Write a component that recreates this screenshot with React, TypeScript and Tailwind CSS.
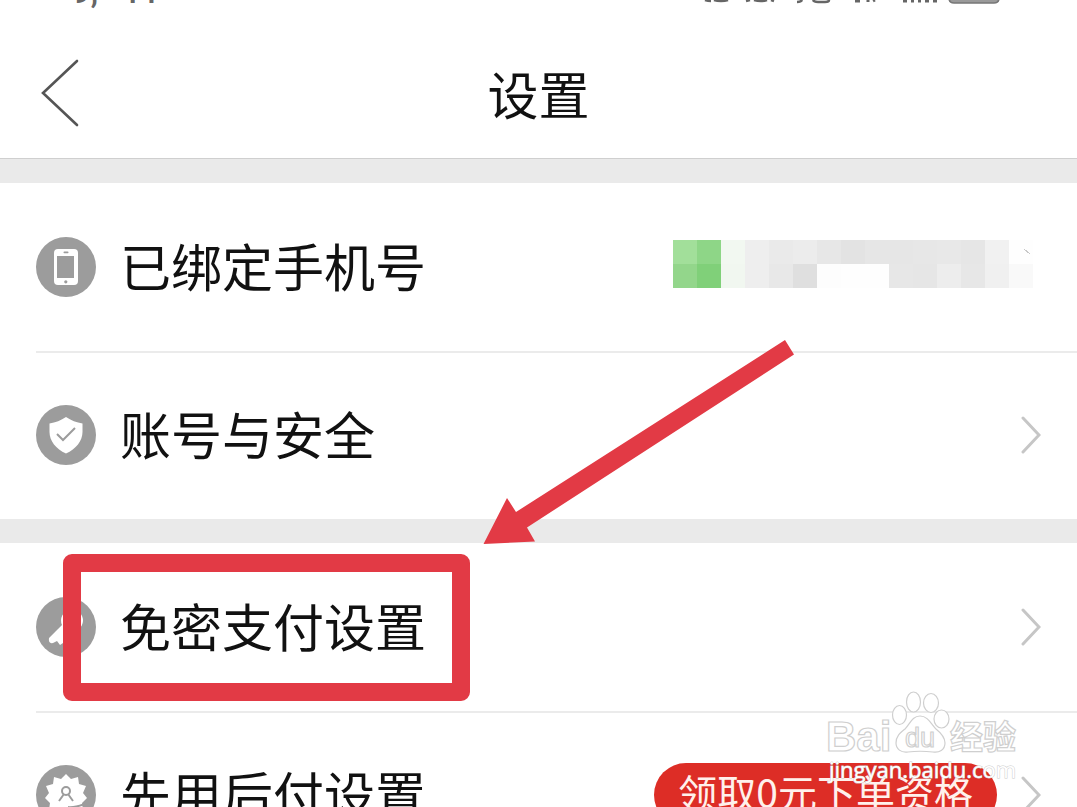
import type { ReactNode } from 'react';

interface RowProps {
  icon: ReactNode;
  label: string;
  extra?: ReactNode;
  divider?: boolean;
  chevron?: boolean;
  highlighted?: boolean;
}

const mosaicTop = [
  '#a2df9a', '#8ed687', '#f2f8f1', '#eeeeee', '#eaeaea', '#ececec', '#e7e7e7', '#e3e3e3',
  '#e6e6e6', '#e6e6e6', '#e7e7e7', '#e8e8e8', '#e6e6e6', '#f1f1f1', '#fefefe',
];
const mosaicBottom = [
  '#93d68b', '#80d079', '#f1f7f0', '#eeeeee', '#e8e8e8', '#dfdfdf', '#fdfdfd', '#fefefe',
  '#fefefe', '#e7e7e7', '#e6e6e6', '#ededed', '#e7e7e7', '#f0f0f0', '#f9f9f9',
];

function Mosaic() {
  return (
    <svg width="368" height="54" viewBox="0 0 368 54" shapeRendering="crispEdges" aria-hidden="true">
      {mosaicTop.map((fill, i) => (
        <rect key={i} x={i * 24} y="0" width="24" height="24" fill={fill} />
      ))}
      {mosaicBottom.map((fill, i) => (
        <rect key={i} x={i * 24} y="24" width="24" height="24" fill={fill} />
      ))}
      <path d="M350 9l4 1 3 4-3-1z" fill="#c8c8c8" />
    </svg>
  );
}

function Chevron() {
  return (
    <svg width="20" height="38" viewBox="0 0 20 38" fill="none" stroke="#c6c6c6" strokeWidth="3" aria-hidden="true">
      <path d="M2 2l16 17L2 36" strokeLinecap="round" />
    </svg>
  );
}

function IconCircle({ children }: { children: ReactNode }) {
  return (
    <svg width="60" height="60" viewBox="0 0 60 60" className="shrink-0" aria-hidden="true">
      <circle cx="30" cy="30" r="30" fill="#9c9c9c" />
      {children}
    </svg>
  );
}

function PhoneIcon() {
  return (
    <IconCircle>
      <rect x="18" y="12" width="24" height="36" rx="4" fill="#fff" />
      <rect x="21" y="19" width="17" height="22" fill="#9c9c9c" />
      <rect x="27.5" y="14.6" width="5" height="1.6" rx="0.8" fill="#9c9c9c" />
      <circle cx="29.8" cy="44.8" r="1.6" fill="#9c9c9c" />
    </IconCircle>
  );
}

function ShieldIcon() {
  return (
    <IconCircle>
      <path d="M30 12c5 3.5 10.500 5.500 16.500 6.500V27c0 9-6.500 17-16.500 21.500C20 44 13.500 36 13.500 27v-8.500C19.500 17.500 25 15.500 30 12z" fill="#fff" />
      <path d="M21 29l6 6 12-12" fill="none" stroke="#9c9c9c" strokeWidth="2" />
    </IconCircle>
  );
}

function KeyIcon() {
  return (
    <IconCircle>
      <path d="M26 28a11 11 0 1 1 21-4 11 11 0 0 1-14 10l-6 8v4l-3 2-3-4-4 2q-5 1-4-5z" fill="#fff" />
      <circle cx="39" cy="22" r="3" fill="#9c9c9c" />
    </IconCircle>
  );
}

function MedalIcon() {
  return (
    <IconCircle>
      <path
        d="M30 9l5 5 7-2 1 7 7 2-3 7 4 5-5 5 1 7-7 1-3 6-7-3-7 3-3-6-7-1 1-7-5-5 4-5-3-7 7-2 1-7 7 2z"
        fill="#fff"
      />
      <g fill="none" stroke="#9c9c9c" strokeWidth="2">
        <circle cx="30" cy="26" r="4" />
        <path d="M23 36l5-7M37 36l-5-7" />
        <path d="M32 42c6 1 11-1 17-3" />
      </g>
    </IconCircle>
  );
}

function Row({ icon, label, extra, divider, chevron = true, highlighted }: RowProps) {
  return (
    <li className="relative bg-white pl-9">
      <a
        href="#"
        className={`flex h-42 items-center pr-9 ${divider ? 'border-y-2 border-t-[#ebebeb] border-b-transparent' : ''}`}
      >
        {icon}
        <span className="ml-6 grow whitespace-nowrap pb-1 text-[51px] leading-none">{label}</span>
        {extra}
        {chevron && <Chevron />}
      </a>
      {highlighted && (
        <span className="pointer-events-none absolute left-[63px] top-[11px] h-[147px] w-[407px] rounded-[9px] border-[18px] border-[#e23a45]" />
      )}
    </li>
  );
}

function StatusBar() {
  return (
    <div className="flex h-7 items-start justify-between overflow-hidden pl-18 pr-[77px] text-[#666]">
      <div className="-mt-[26px] flex gap-6 font-['Roboto',sans-serif] text-[33px] font-medium leading-9">
        <span>9,</span>
        <span>11</span>
      </div>
      <svg width="296" height="5" viewBox="704 0 296 5" aria-hidden="true">
        <g fill="none" stroke="#666" strokeWidth="2.500">
          <path d="M705 0q3 1 6 1M714 0q3 1 7 1t7-1" />
          <path d="M746 1l4-1M754 0q7 2 13 0M771 0l3 1" />
          <path d="M797 2q4 0 5-2M813 0q1 2 5 2h7q4 0 4-2" />
          <path d="M855 1h5M868 0v2M873 1l2-1" strokeWidth="3" />
          <path d="M903 1h4M911 1h3M918 1h3M925 1h4M933 1h4" strokeWidth="3" />
        </g>
        <path d="M949-6h50v4q0 5-5 5h-40q-5 0-5-5z" fill="#9a9a9a" stroke="#777" strokeWidth="1.500" />
      </svg>
    </div>
  );
}

function Watermark() {
  return (
    <svg
      width="206"
      height="106"
      viewBox="820 685 206 106"
      className="pointer-events-none absolute right-[51px] top-[685px]"
      fill="#fff"
      stroke="#cfcfcf"
      strokeWidth="1.200"
    >
      <ellipse cx="899.500" cy="715" rx="7" ry="9.500" />
      <ellipse cx="913.500" cy="702" rx="7" ry="10" />
      <ellipse cx="931" cy="703" rx="7.500" ry="9.500" />
      <ellipse cx="941.500" cy="719" rx="7.500" ry="9" />
      <path d="M920 716c8 0 11 8 16 13 5 4 9 8 9 14 0 7-6 10-12 9-9-1-17-1-25 0-7 1-12-3-12-9 0-7 4-10 9-14 5-5 7-13 15-13z" />
      <g className="font-['Liberation_Sans','Noto_Sans_CJK_SC',sans-serif]">
        <text x="826" y="751" fontSize="42" fontWeight="700">Bai</text>
        <text x="905" y="747" fontSize="27">du</text>
        <text x="950" y="749" fontSize="33" fontWeight="700">经验</text>
      </g>
      <text
        x="829"
        y="778"
        fontSize="22"
        stroke="#cccccc"
        strokeWidth="1"
        className="font-['Open_Sans',sans-serif] [paint-order:stroke]"
      >
        jingyan.baidu.com
      </text>
    </svg>
  );
}

export default function App() {
  return (
    <div className="relative h-screen overflow-hidden bg-[#eaeaea] font-['Noto_Sans_CJK_SC',sans-serif] text-[#111]">
      <header className="border-b border-[#cfcfcf] bg-white">
        <StatusBar />
        <div className="grid h-[130px] grid-cols-[1fr_auto_1fr] items-center">
          <button type="button" aria-label="返回" className="ml-10 justify-self-start">
            <svg width="40" height="68" viewBox="0 0 40 68" fill="none" stroke="#555" strokeWidth="2.600">
              <path d="M37 2L3 34l34 32" strokeLinecap="round" />
            </svg>
          </button>
          <h1 className="text-[51px] leading-none">设置</h1>
        </div>
      </header>

      <ul className="mt-6">
        <Row icon={<PhoneIcon />} label="已绑定手机号" extra={<Mosaic />} chevron={false} />
        <Row icon={<ShieldIcon />} label="账号与安全" divider />
      </ul>

      <ul className="mt-6">
        <Row icon={<KeyIcon />} label="免密支付设置" highlighted />
        <Row
          icon={<MedalIcon />}
          label="先用后付设置"
          divider
          extra={
            <span className="mr-6 whitespace-nowrap rounded-full bg-[#dd2d26] px-6 pb-2 text-[39px] leading-14 text-[#fff1ec]">
              领取0元下单资格
            </span>
          }
        />
      </ul>

      <svg
        width="312"
        height="206"
        viewBox="483 340 312 206"
        className="pointer-events-none absolute left-[483px] top-[340px]"
        aria-hidden="true"
      >
        <path d="M785 340l9 14.500-267 173 8 14-51.500 2.500 23.500-46 9 14z" fill="#e23a45" />
      </svg>
      <Watermark />
    </div>
  );
}
